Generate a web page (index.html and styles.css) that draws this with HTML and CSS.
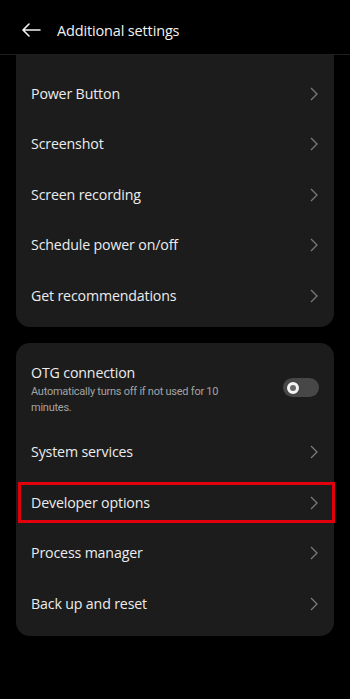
FILE: index.html
```html
<!DOCTYPE html>
<html>
<head>
<meta charset="utf-8">
<link rel="stylesheet" href="styles.css">
</head>
<body>
<div class="screen">
  <header class="topbar">
    <svg class="back" width="20" height="14" viewBox="0 0 20 14">
      <path d="M19 7H2M8 1L2 7l6 6" fill="none" stroke="#f2f2f2" stroke-width="1.6" stroke-linecap="round" stroke-linejoin="round"/>
    </svg>
    <span class="title">Additional settings</span>
  </header>
  <main class="content">
    <section class="card card-top">
      <div class="row"><span class="label">Power Button</span><svg class="chev" width="8" height="14" viewBox="0 0 8 14"><path d="M1 1l6 6-6 6" fill="none" stroke="#7a7a7a" stroke-width="1.3"/></svg></div>
      <div class="row"><span class="label">Screenshot</span><svg class="chev" width="8" height="14" viewBox="0 0 8 14"><path d="M1 1l6 6-6 6" fill="none" stroke="#7a7a7a" stroke-width="1.3"/></svg></div>
      <div class="row"><span class="label">Screen recording</span><svg class="chev" width="8" height="14" viewBox="0 0 8 14"><path d="M1 1l6 6-6 6" fill="none" stroke="#7a7a7a" stroke-width="1.3"/></svg></div>
      <div class="row"><span class="label">Schedule power on/off</span><svg class="chev" width="8" height="14" viewBox="0 0 8 14"><path d="M1 1l6 6-6 6" fill="none" stroke="#7a7a7a" stroke-width="1.3"/></svg></div>
      <div class="row"><span class="label">Get recommendations</span><svg class="chev" width="8" height="14" viewBox="0 0 8 14"><path d="M1 1l6 6-6 6" fill="none" stroke="#7a7a7a" stroke-width="1.3"/></svg></div>
    </section>
    <section class="card card-second">
      <div class="row row-tall">
        <div class="text">
          <div class="label">OTG connection</div>
          <div class="sub">Automatically turns off if not used for 10 minutes.</div>
        </div>
        <div class="toggle"><span class="knob"></span></div>
      </div>
      <div class="row"><span class="label">System services</span><svg class="chev" width="8" height="14" viewBox="0 0 8 14"><path d="M1 1l6 6-6 6" fill="none" stroke="#7a7a7a" stroke-width="1.3"/></svg></div>
      <div class="row row-marked"><span class="label">Developer options</span><svg class="chev" width="8" height="14" viewBox="0 0 8 14"><path d="M1 1l6 6-6 6" fill="none" stroke="#7a7a7a" stroke-width="1.3"/></svg><span class="mark"></span></div>
      <div class="row"><span class="label">Process manager</span><svg class="chev" width="8" height="14" viewBox="0 0 8 14"><path d="M1 1l6 6-6 6" fill="none" stroke="#7a7a7a" stroke-width="1.3"/></svg></div>
      <div class="row"><span class="label">Back up and reset</span><svg class="chev" width="8" height="14" viewBox="0 0 8 14"><path d="M1 1l6 6-6 6" fill="none" stroke="#7a7a7a" stroke-width="1.3"/></svg></div>
    </section>
  </main>
</div>
</body>
</html>
```
FILE: styles.css
```css
* { box-sizing: border-box; }
html, body {
  margin: 0;
  padding: 0;
  background: #000;
}
body {
  font-family: "Open Sans", "Noto Sans", sans-serif;
  color: #ececec;
}
.screen {
  width: 350px;
  height: 699px;
  overflow: hidden;
  background: #000;
}
.topbar {
  height: 55px;
  display: flex;
  align-items: center;
  padding: 6px 0 0 21px;
  border-bottom: 1px solid #1f1f1f;
  background: #000;
}
.back {
  display: block;
  margin-right: 16px;
}
.title {
  font-size: 14.5px;
  color: #f2f2f2;
  letter-spacing: -0.15px;
}
.content {
  display: flex;
  flex-direction: column;
  gap: 16px;
  padding: 0 16px;
}
.card {
  background: #1c1c1c;
  border-radius: 14px;
}
.card-top {
  border-radius: 0 0 14px 14px;
  padding: 13px 0 6px;
}
.card-second {
  padding: 9px 0 7px;
}
.row {
  position: relative;
  height: 50.5px;
  display: flex;
  align-items: center;
  justify-content: space-between;
  padding: 0 16px 0 15px;
}
.label {
  font-size: 14.2px;
  color: #ececec;
  letter-spacing: -0.15px;
}
.chev { display: block; margin-top: 1px; }
.row-tall {
  height: 75px;
  align-items: center;
  padding-top: 1px;
}
.text {
  width: 215px;
}
.row-tall .label {
  line-height: 20px;
}
.sub {
  font-family: Roboto, "Open Sans", sans-serif;
  font-size: 11px;
  letter-spacing: -0.25px;
  line-height: 16px;
  color: #a3a3a3;
  margin-top: 1px;
}
.toggle {
  width: 36px;
  height: 19px;
  border-radius: 10px;
  background: #474747;
  display: flex;
  align-items: center;
  padding-left: 4px;
  margin-right: -1px;
  margin-top: -4px;
}
.knob {
  width: 12px;
  height: 12px;
  border-radius: 50%;
  border: 3px solid #f4f4f4;
  background: #6a6a6a;
}
.mark {
  position: absolute;
  top: 5px;
  bottom: 5px;
  left: 2px;
  right: -1px;
  border: 3px solid #e1000c;
  pointer-events: none;
}
```
